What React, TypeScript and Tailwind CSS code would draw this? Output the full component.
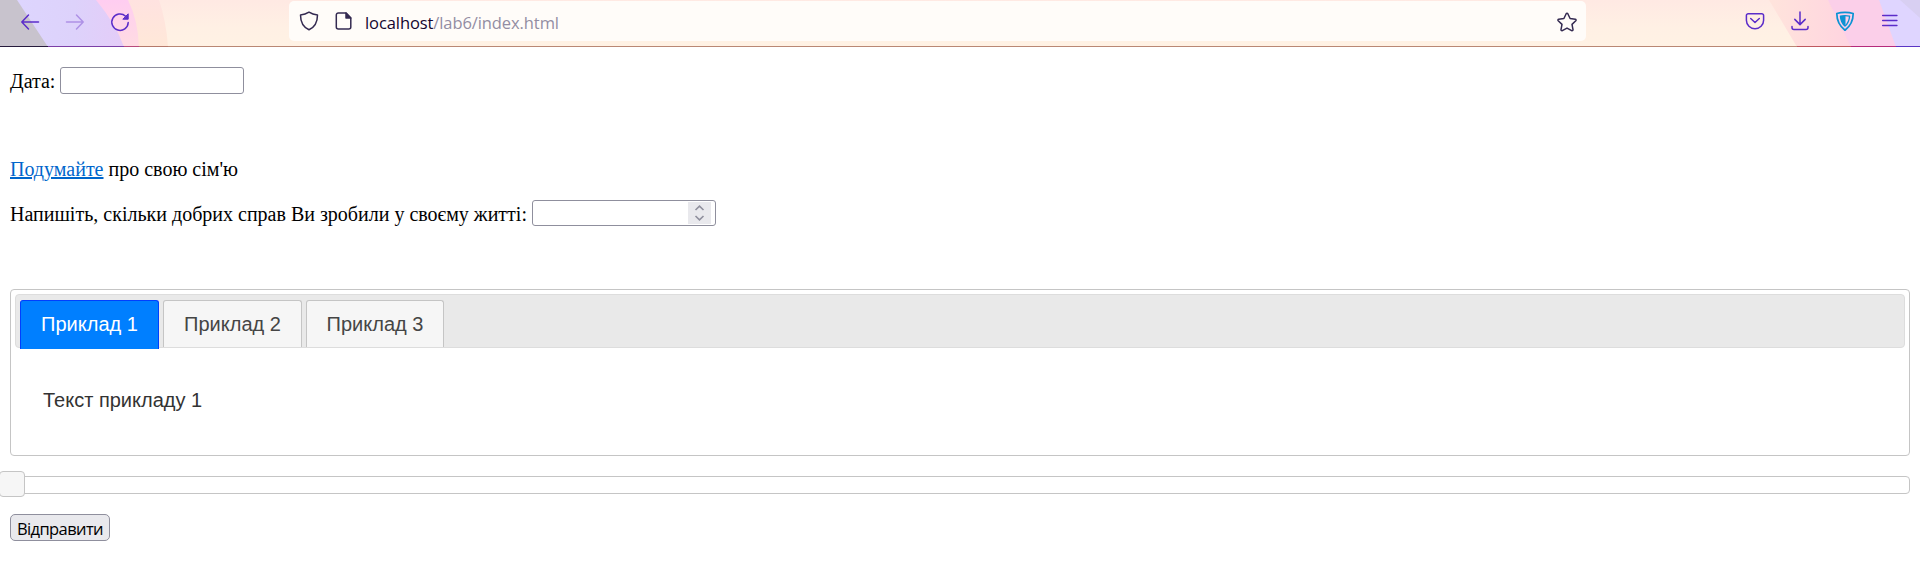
import type { ReactNode } from "react";

const tabs = ["Приклад 1", "Приклад 2", "Приклад 3"];

function Icon({ children, className }: { children: ReactNode; className: string }) {
  return (
    <svg
      viewBox="0 0 20 20"
      className={`size-5 shrink-0 ${className}`}
      fill="none"
      stroke="currentColor"
      strokeWidth="1.5"
      strokeLinecap="round"
      strokeLinejoin="round"
    >
      {children}
    </svg>
  );
}

function ThemeArt() {
  return (
    <svg className="absolute inset-0 h-[47px] w-full" viewBox="0 0 1920 47" preserveAspectRatio="none">
      <defs>
        <linearGradient id="base" x1="0" y1="0" x2="0" y2="1">
          <stop offset="0" stopColor="#ffe9e3" />
          <stop offset="0.6" stopColor="#fff0e4" />
          <stop offset="1" stopColor="#fff2e4" />
        </linearGradient>
        <linearGradient id="lilac" x1="0" y1="0" x2="1" y2="0">
          <stop offset="0" stopColor="#ddd6ff" />
          <stop offset="0.6" stopColor="#ddd2fb" />
          <stop offset="1" stopColor="#e4ccf8" />
        </linearGradient>
        <linearGradient id="pink" x1="0" y1="0" x2="0" y2="1">
          <stop offset="0" stopColor="#ffcdf1" />
          <stop offset="1" stopColor="#ffdce2" />
        </linearGradient>
        <linearGradient id="peach" x1="0" y1="0" x2="0" y2="1">
          <stop offset="0" stopColor="#ffe2e0" />
          <stop offset="1" stopColor="#ffe8d8" />
        </linearGradient>
        <linearGradient id="rose" x1="0" y1="0" x2="1" y2="0">
          <stop offset="0" stopColor="#ffe4dc" />
          <stop offset="0.6" stopColor="#ffd2e0" />
          <stop offset="1" stopColor="#ffcfe4" />
        </linearGradient>
      </defs>
      <rect width="1920" height="47" fill="url(#base)" />
      <path d="M0 0H159Q166 20 168 47H0Z" fill="url(#peach)" />
      <path d="M0 0H128Q138 20 139 47H0Z" fill="url(#pink)" />
      <path d="M0 0H96Q116 24 124 47H0Z" fill="url(#lilac)" />
      <path d="M0 0H17L48 47H0Z" fill="#c8c3cd" />
      <path d="M1769 0H1920V47H1797Z" fill="url(#rose)" />
      <path d="M1828 0H1920V47H1851Z" fill="#fbcfe9" />
      <path d="M1879 0H1920V47H1896Z" fill="#dfd5ff" />
      <path d="M1900 0H1920V18Z" fill="#d8cff2" />
      <g>
        <rect y="46" width="1920" height="1" fill="#b98774" />
        <rect y="46" width="168" height="1" fill="#b5796b" />
        <rect y="46" width="139" height="1" fill="#b84b7c" />
        <rect y="46" width="124" height="1" fill="#7c3fa6" />
        <rect y="46" width="48" height="1" fill="#271b3c" />
        <rect x="1797" y="46" width="54" height="1" fill="#bf5960" />
        <rect x="1851" y="46" width="45" height="1" fill="#b52b7c" />
        <rect x="1896" y="46" width="24" height="1" fill="#5b35c4" />
      </g>
    </svg>
  );
}

function Toolbar() {
  return (
    <header className="relative h-[47px]">
      <ThemeArt />
      <div className="relative flex h-[42px] items-center text-[#5b2cc9]">
        <Icon className="ml-5 mt-px">
          <path d="M18.5 10H2M8.5 3 1.8 10l6.7 7" />
        </Icon>
        <Icon className="ml-[25px] mt-px text-[#ae91e6]">
          <path d="M1.5 10H18M11.5 3l6.7 7-6.7 7" />
        </Icon>
        <Icon className="ml-[25px] mt-px">
          <path d="M15.6 4.2A8.2 8.2 0 1 0 18.2 10.5" />
          <path d="M18.2 2.2v5h-5Z" fill="currentColor" strokeWidth="1" />
        </Icon>
        <div className="ml-[159px] flex h-10 w-[1297px] items-center rounded-[5px] bg-[#fffcf9] text-[#342a51]">
          <Icon className="ml-2.5">
            <path d="M10 1.2C7.6 2.8 4.8 3.7 1.5 3.9c0 6.8 2.4 12 8.5 14.8 6.1-2.8 8.5-8 8.5-14.8C15.2 3.7 12.4 2.8 10 1.2Z" />
          </Icon>
          <Icon className="ml-[15px]">
            <path d="M12 2H4.3a2 2 0 0 0-2 2v12a2 2 0 0 0 2 2h10.5a2 2 0 0 0 2-2V7Z" />
            <path d="M12 2v5h4.8Z" fill="currentColor" />
          </Icon>
          <span className="ml-[11px] mt-[3px] w-[1194px] font-['Open_Sans','Noto_Sans',sans-serif] text-[16.5px] leading-6 tracking-[-0.09px] text-[#938da3]">
            <span className="text-[#15052e]">localhost</span>/lab6/index.html
          </span>
          <Icon className="mr-[9px] mt-px">
            <path d="M9.2 1.7a.9.9 0 0 1 1.6 0l2.3 4.8 5.2.7a.9.9 0 0 1 .5 1.5L15 12.4l1 5.2a.9.9 0 0 1-1.3 1L10 16.1l-4.7 2.5a.9.9 0 0 1-1.3-1l1-5.2-3.8-3.7a.9.9 0 0 1 .5-1.5l5.2-.7Z" />
          </Icon>
        </div>
        <Icon className="ml-[159px]">
          <path d="M3.2 2.7h13.6a1.8 1.8 0 0 1 1.8 1.8v4.7a8.6 8.6 0 0 1-17.2 0V4.5a1.8 1.8 0 0 1 1.8-1.8Z" />
          <path d="m5.7 7.5 4.3 4 4.3-4" />
        </Icon>
        <Icon className="ml-[25px]">
          <path d="M10 .9v12.6M4.800 8.400l5.200 5.200 5.200-5.200M2 15.500v1a2 2 0 0 0 2 2h12a2 2 0 0 0 2-2v-1" />
        </Icon>
        <Icon className="ml-[25px] text-[#0b93d3]">
          <path d="M10 1.3c3 0 5.700.4 8.200 1.200 0 7.300-2.700 12.500-8.200 16.700C4.500 15 1.800 9.800 1.800 2.500 4.300 1.700 7 1.300 10 1.300Z" strokeWidth="1.700" />
          <path d="M10 4.600c1.700 0 3.200.2 4.600.5-.3 4.300-1.700 7.400-4.600 10-2.900-2.600-4.300-5.700-4.600-10 1.400-.3 2.900-.5 4.600-.5Z" strokeWidth="1.300" />
          <path d="M10.500 4.600v10.500C7.100 12.500 5.700 9.400 5.400 5.100c1.400-.3 3.100-.5 5.100-.5Z" fill="currentColor" stroke="none" />
        </Icon>
        <Icon className="ml-[25px]">
          <path d="M2.700 4.500h14.200M2.700 9.500h14.200M2.700 14.500h14.200" />
        </Icon>
      </div>
    </header>
  );
}

function Spinner() {
  return (
    <div className="flex h-[26px] w-[184px] items-center justify-end rounded-[3px] border border-[#8f8f9d] pr-1">
      <svg viewBox="0 0 23 22" className="h-[22px] w-[23px] bg-[#e9e9ed]" fill="none" stroke="#8f8f9d" strokeWidth="1.6">
        <path d="m7.5 8 4-3.800 4 3.800M7.500 14l4 3.800 4-3.800" />
      </svg>
    </div>
  );
}

export default function App() {
  return (
    <div className="h-[562px] overflow-hidden bg-white font-['Liberation_Serif',serif] text-xl leading-[23px] text-black">
      <Toolbar />
      <main className="flex flex-col px-2.5 pt-5">
        <label className="flex h-[27px] items-center">
          <span className="w-[50px] whitespace-nowrap pt-0.5">Дата:</span>
          <input className="h-[27px] w-[184px] rounded-[3px] border border-[#8f8f9d] bg-white" />
        </label>
        <p className="mt-16">
          <a href="#" className="text-[#0066cc] underline">Подумайте</a> про свою сім'ю
        </p>
        <div className="mt-[19px] flex h-[26px] items-center">
          <span className="w-[522px] whitespace-nowrap pt-0.5">Напишіть, скільки добрих справ Ви зробили у своєму житті:</span>
          <Spinner />
        </div>
        <section className="mt-[63px] h-[167px] rounded border border-[#c5c5c5] p-1 font-['Liberation_Sans',Arial,sans-serif] text-[#333333]">
          <div className="flex h-[54px] gap-1 rounded border border-[#dddddd] bg-[#e9e9e9] pl-1 pt-[5px]">
            {tabs.map((tab, i) => (
              <button
                key={tab}
                className={
                  i === 0
                    ? "h-[49px] w-[139px] rounded-t-[3px] border border-b-0 border-[#003eff] bg-[#007fff] pb-0.5 text-white"
                    : "h-[47px] w-[139px] rounded-t-[3px] border border-b-0 border-[#c5c5c5] bg-[#f6f6f6] text-[#454545] last:w-[138px]"
                }
              >
                {tab}
              </button>
            ))}
          </div>
          <p className="pl-7 pt-[41px]">Текст прикладу 1</p>
        </section>
        <div className="relative mt-5 h-[18px] rounded border border-[#c5c5c5]">
          <span className="absolute -left-3 -top-1.5 h-[26px] w-[26px] rounded border border-[#c5c5c5] bg-[#f6f6f6]" />
        </div>
        <button className="mt-5 h-[27px] w-[100px] rounded-[5px] border border-[#8f8f9d] bg-[#e9e9ed] pt-0.5 font-['Open_Sans','Noto_Sans',sans-serif] text-[16.5px] leading-6 tracking-[-0.6px]">
          Відправити
        </button>
      </main>
    </div>
  );
}
